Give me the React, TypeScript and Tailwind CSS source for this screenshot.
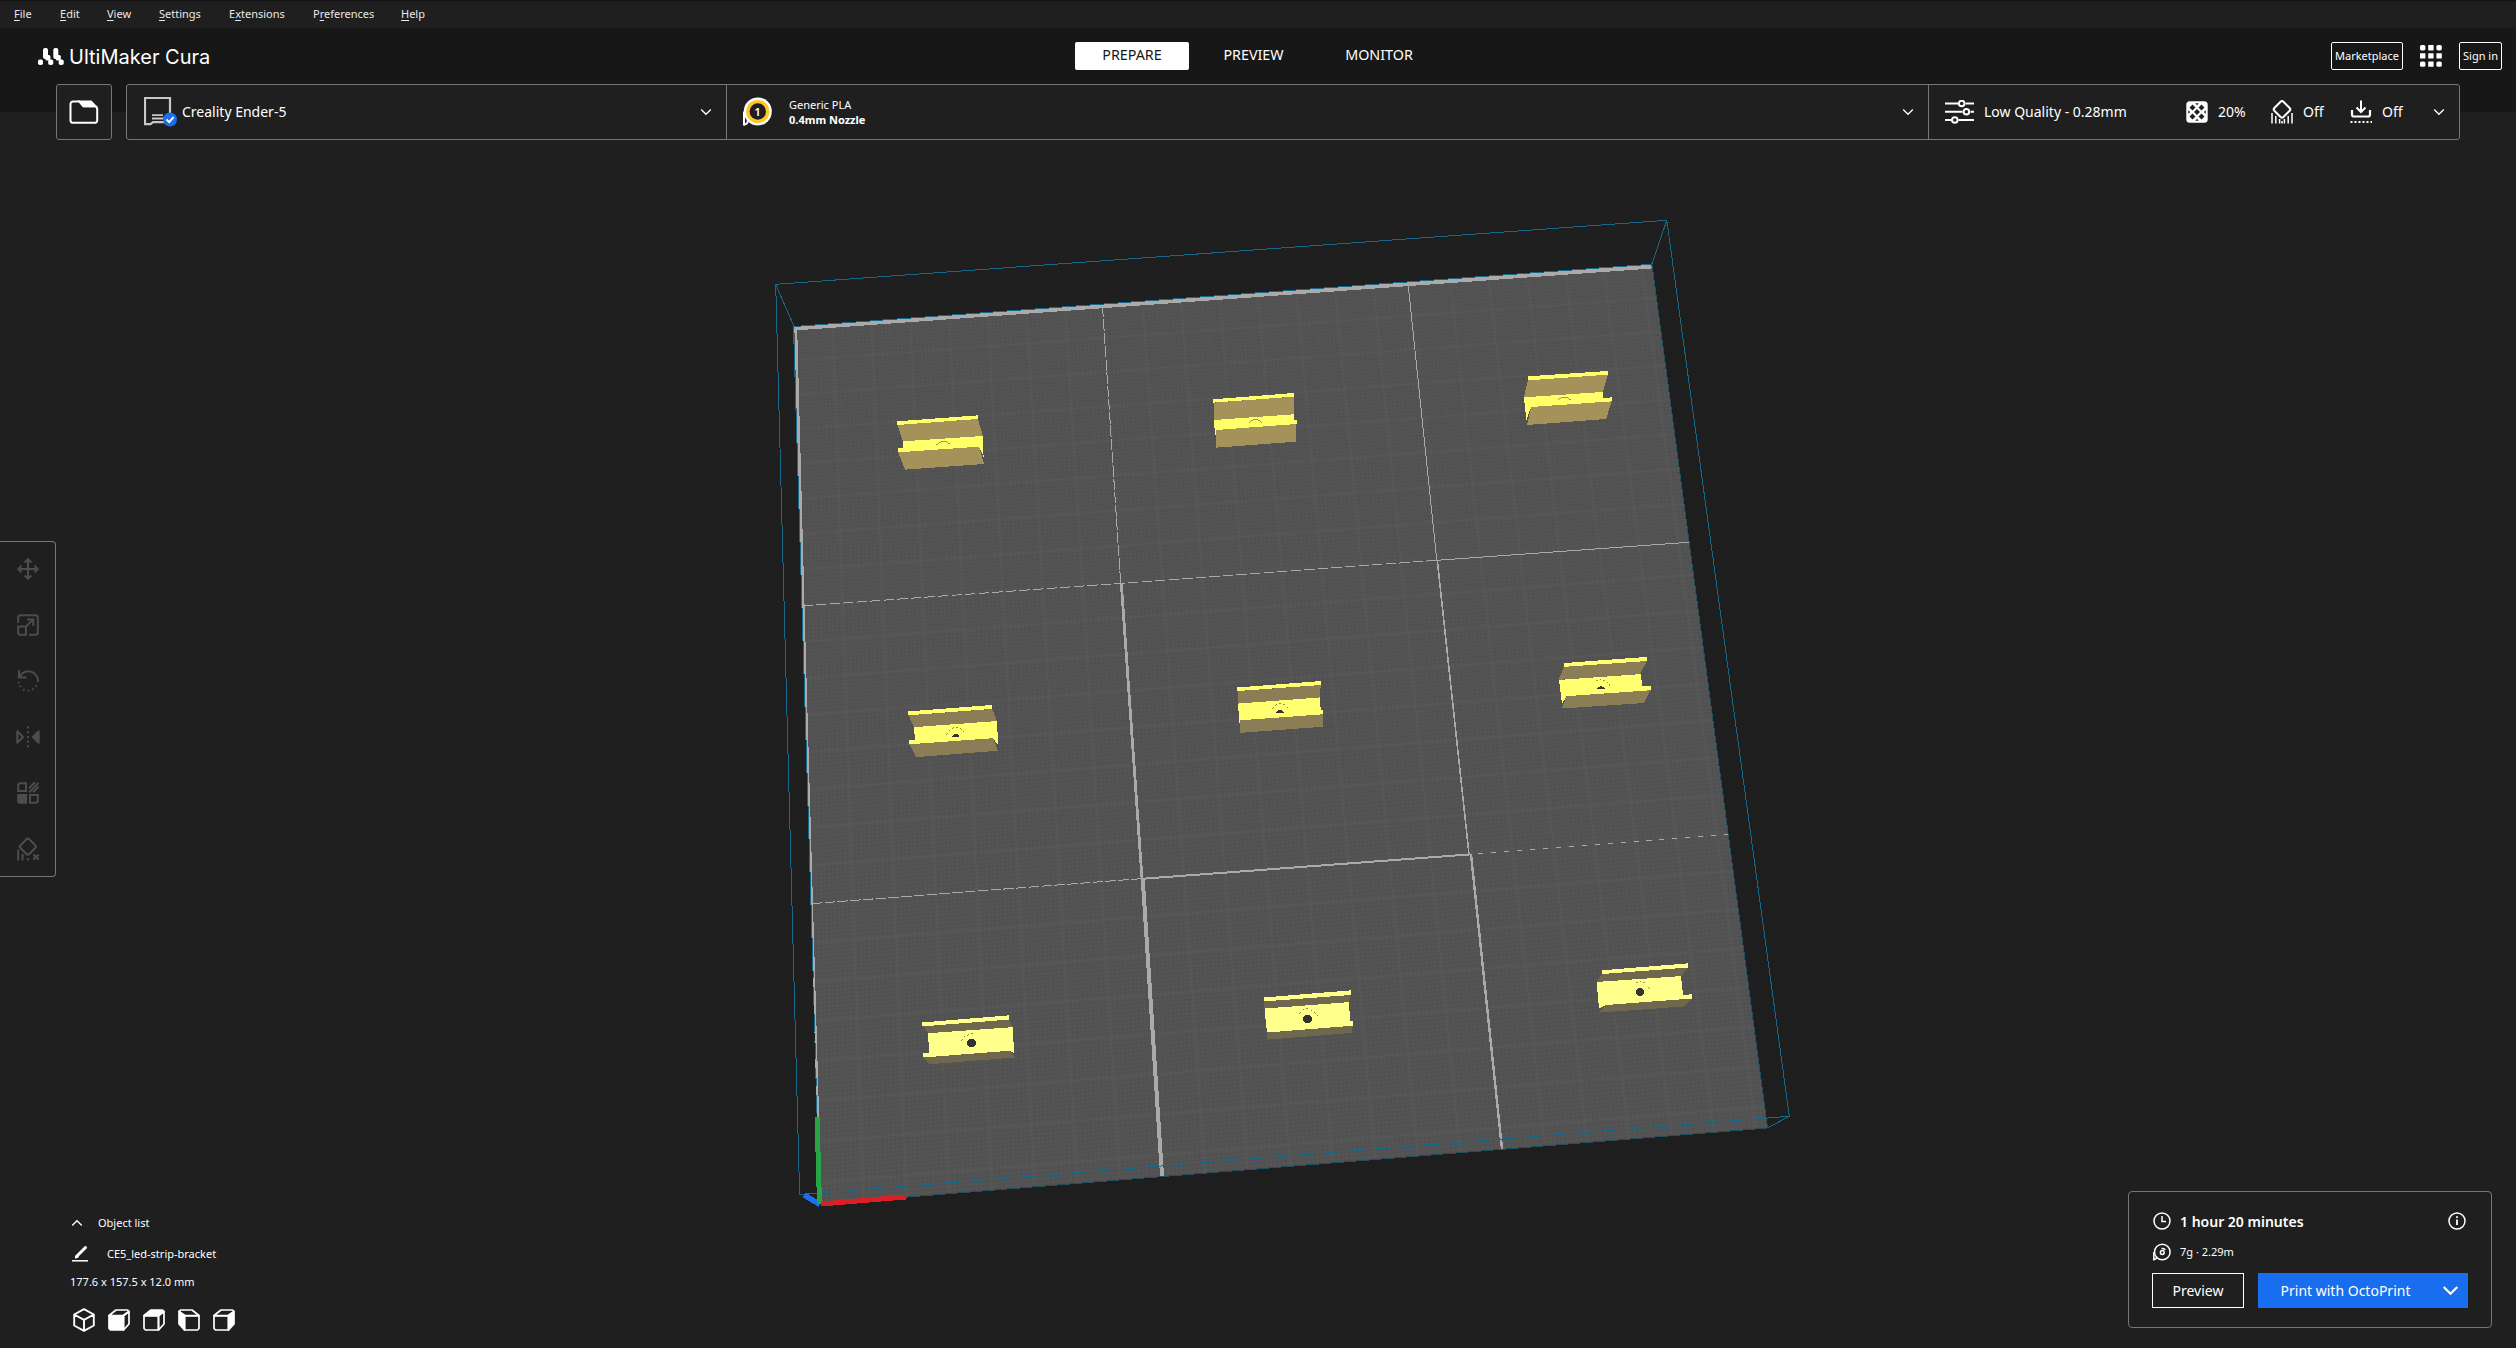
import React from "react";

type P = [number, number];

/* ---------- build plate geometry ---------- */

const TL: P = [794, 326.5];
const TR: P = [1652, 264.5];
const BL: P = [820.5, 1204];
const BR: P = [1767.5, 1128];

// Projective mapping of the unit square onto the plate.
const proj = (() => {
  const sx = TL[0] - TR[0] + BR[0] - BL[0];
  const sy = TL[1] - TR[1] + BR[1] - BL[1];
  const dx1 = TR[0] - BR[0];
  const dx2 = BL[0] - BR[0];
  const dy1 = TR[1] - BR[1];
  const dy2 = BL[1] - BR[1];
  const det = dx1 * dy2 - dx2 * dy1;
  const g = (sx * dy2 - dx2 * sy) / det;
  const h = (dx1 * sy - sx * dy1) / det;
  const a = TR[0] - TL[0] + g * TR[0];
  const b = BL[0] - TL[0] + h * BL[0];
  const d = TR[1] - TL[1] + g * TR[1];
  const e = BL[1] - TL[1] + h * BL[1];
  return (u: number, v: number): P => {
    const w = g * u + h * v + 1;
    return [(a * u + b * v + TL[0]) / w, (d * u + e * v + TL[1]) / w];
  };
})();

const U = 0.0449;
const V = 0.0425;

function seg(u0: number, v0: number, u1: number, v1: number) {
  const [x0, y0] = proj(u0, v0);
  const [x1, y1] = proj(u1, v1);
  return `M${x0.toFixed(1)} ${y0.toFixed(1)}L${x1.toFixed(1)} ${y1.toFixed(1)}`;
}

function gridPath(step: number, keep: (i: number) => boolean) {
  let d = "";
  for (let i = 1; i * step * U < 1; i++) if (keep(i)) d += seg(i * step * U, 0, i * step * U, 1);
  for (let i = 1; i * step * V < 1; i++) if (keep(i)) d += seg(0, i * step * V, 1, i * step * V);
  return d;
}

const fineGrid = gridPath(0.1, (i) => i % 10 !== 0);
const minorGrid = gridPath(1, (i) => i % 8 !== 0);

const BRIGHT = ["#ffff68", "#ffff70", "#ffff8c"];
const DARK = ["#a5925a", "#8b7d55", "#6f684e"];

type Part = {
  row: number;
  t: string;
  dark: string[];
  bright: string[];
  arc: string;
  hole?: React.ReactNode;
};

const A = "translate(760 200) scale(0.35714 0.33333)";
const B = "translate(1300 200) scale(0.35714 0.33333)";
const C = "translate(760 660) scale(0.40816 0.35714)";
const D = "translate(1400 640) scale(0.33333 0.34439)";

const parts: Part[] = [
  {
    row: 0, t: A,
    dark: ["385,675 610,657 624,708 400,724", "387,757 613,738 627,792 406,809"],
    bright: ["384,664 610,646 610,657 384,675", "400,724 624,708 626,770 620,755 613,740 387,757 387,745 400,743"],
    arc: "M494 735Q513 715 532 732",
  },
  {
    row: 0, t: A,
    dark: ["1271,608 1495,590 1495,643 1271,660", "1277,690 1501,672 1501,725 1277,743"],
    bright: ["1268,598 1495,579 1495,590 1268,608", "1271,660 1495,643 1495,660 1503,660 1503,672 1277,690 1277,705 1274,705"],
    arc: "M1369 668Q1387 649 1406 668",
  },
  {
    row: 0, t: B,
    dark: ["638,541 862,524 848,576 627,592", "647,621 873,604 857,657 636,675"],
    bright: ["638,529 862,513 862,524 638,541", "627,592 848,576 848,594 874,592 874,604 647,621 634,660"],
    arc: "M722 600Q740 584 758 600",
  },
  {
    row: 1, t: C,
    dark: ["364,155 569,137 581,171 377,188", "366,236 571,219 583,254 382,272"],
    bright: ["363,144 568,126 568,137 363,155", "377,188 581,171 583,238 571,219 366,236 366,225 380,223"],
    arc: "M457 209Q479 170 501 203",
    hole: <path d="M470 216Q480 197 490 214Z" />,
  },
  {
    row: 1, t: C,
    dark: ["1171,87 1374,70 1371,105 1171,122", "1175,169 1379,152 1379,187 1176,204"],
    bright: ["1169,77 1374,59 1374,70 1169,87", "1171,122 1371,105 1374,140 1379,140 1379,152 1176,169 1175,180"],
    arc: "M1255 137Q1274 108 1295 135",
    hole: <path d="M1264 148Q1274 130 1284 147Z" />,
  },
  {
    row: 1, t: D,
    dark: ["492,78 741,61 720,99 475,116", "500,163 752,146 732,183 486,199"],
    bright: ["492,67 741,49 741,61 492,78", "477,116 722,99 727,134 752,134 752,146 500,163 486,185"],
    arc: "M588 119Q622 108 632 138",
    hole: <path d="M590 142Q602 126 615 142Z" />,
  },
  {
    row: 2, t: C,
    dark: ["400,1026 609,1007 620,1028 412,1045", "400,1113 612,1094 625,1113 415,1132"],
    bright: ["397,1015 609,995 609,1007 397,1026", "412,1045 620,1028 622,1100 612,1094 400,1113 400,1101 414,1100"],
    arc: "M493 1067Q502 1046 528 1046",
    hole: <ellipse cx="518" cy="1073" rx="11" ry="12" />,
  },
  {
    row: 2, t: C,
    dark: ["1236,956 1447,938 1443,958 1236,976", "1242,1043 1452,1024 1450,1044 1243,1063"],
    bright: ["1235,945 1447,925 1447,938 1235,956", "1236,976 1443,958 1446,1012 1453,1012 1453,1024 1242,1043"],
    arc: "M1322 990Q1340 960 1366 997",
    hole: <ellipse cx="1341" cy="1005" rx="11" ry="12" />,
  },
  {
    row: 2, t: D,
    dark: ["606,969 864,950 845,976 590,993", "617,1060 875,1041 852,1064 597,1082"],
    bright: ["606,959 864,939 864,951 606,970", "590,993 843,976 849,1030 876,1029 876,1041 617,1060 597,1070"],
    arc: "M708 994Q740 988 749 1014",
    hole: <circle cx="720" cy="1022" r="12" />,
  },
];

function Bracket({ part }: { part: Part }) {
  return (
    <g transform={part.t}>
      {part.dark.map((p) => (
        <polygon key={p} points={p} fill={DARK[part.row]} />
      ))}
      {part.bright.map((p) => (
        <polygon key={p} points={p} fill={BRIGHT[part.row]} />
      ))}
      <path d={part.arc} fill="none" stroke="#8a8148" strokeWidth="2.4" strokeDasharray={part.row ? "5 6" : undefined} />
      {part.hole && <g fill="#333331">{part.hole}</g>}
    </g>
  );
}

function Scene() {
  return (
    <svg className="absolute inset-0 h-[1348px] w-[2516px]" viewBox="0 0 2516 1348" shapeRendering="crispEdges" fill="none">
      <polygon points="794,327 1711,263 1838,1139 1500,1167 820,1219" fill="#1e1e1e" />
      <polygon points="794,326.5 1652,264.5 1767.5,1128 820.5,1204" fill="#555555" />
      <path d={fineGrid} stroke="#505050" shapeRendering="geometricPrecision" strokeWidth="0.9" />
      <path d={minorGrid} stroke="#585858" shapeRendering="geometricPrecision" />

      <g stroke="#aaaaaa">
        <path d="M794.5 328.5L1651.500 266.500" strokeWidth="4" />
        <path d="M795.800 328L804.600 660" strokeWidth="2.800" />
        <path d="M804.900 660L820.500 1203" strokeWidth="2.200" />
        <path d="M802.4 606L1120.7 583.3L1436.8 560.3" strokeDasharray="10.3 3.3" />
        <path d="M1436.8 560.3L1689 542.3" />
        <path d="M1102.5 306L1120.7 583.3" strokeDasharray="11.5 1.8" />
        <path d="M1408 283L1436.8 560.3" />
        <path d="M1121.3 583.3L1142 878.6" strokeWidth="2.800" />
        <path d="M1142.7 878.6L1162 1176" strokeWidth="4" />
        <path d="M1437.3 560.3L1469 854.2" strokeWidth="1.6" />
        <path d="M1471 854.2L1502 1149" strokeWidth="2.4" />
        <path d="M811.8 903.6L1142 878.6" strokeDasharray="10.5 2.3" />
        <path d="M1142 878.8L1470 854.4" strokeWidth="2" />
        <path d="M1478 853.6L1728.7 834.2" strokeDasharray="5 8" />
      </g>

      <g stroke="#14698a">
        <path d="M775.7 284.3L1666.8 220.3L1789.3 1116.3L799.6 1194.6Z" />
        <path d="M775.7 284.3L794 326.500L1651.8 264.200L1666.8 220.3" />
        <path d="M793.500 326.7L812.700 960" />
        <path d="M812.700 960L819.500 1203" strokeDasharray="18 9" />
        <path d="M1789.3 1116.3L1767.3 1128" />
      </g>
      <path d="M1652 264.7L1767.5 1128L820.5 1204" stroke="#234e5e" />

      {parts.map((p, i) => (
        <Bracket key={i} part={p} />
      ))}

      <path d="M804 1195L820 1204.5" stroke="#1a6ff0" strokeWidth="5.500" />
      <path d="M817 1117L819.500 1204" stroke="#26a544" strokeWidth="5" />
      <path d="M821 1204L905.5 1197" stroke="#dc1f26" strokeWidth="5" />
    </svg>
  );
}

/* ---------- icons ---------- */

function Chevron({ size = 12, up = false, w = 1.3 }: { size?: number; up?: boolean; w?: number }) {
  return (
    <svg width={size} height={size} viewBox="0 0 12 12" fill="none" stroke="#fff" strokeWidth={w}>
      <path d={up ? "M1.2 8.5L6 3.7L10.8 8.5" : "M1.2 3.5L6 8.3L10.8 3.5"} />
    </svg>
  );
}

function Logo() {
  return (
    <svg className="mt-px" width="26" height="18" viewBox="0 0 26 18" fill="#fff">
      <rect x="5" y="0" width="5" height="11" rx="2" />
      <rect x="15.3" y="0" width="5" height="11" rx="2" />
      <rect x="0" y="11.5" width="5" height="5.5" rx="1.8" />
      <rect x="10.2" y="11.5" width="5" height="5.5" rx="1.8" />
      <rect x="20.7" y="11.5" width="5" height="5.5" rx="1.8" />
      <rect x="7.4" y="7" width="5" height="5.5" rx="1.5" />
      <rect x="17.8" y="7" width="5" height="5.5" rx="1.5" />
    </svg>
  );
}

function FolderIcon() {
  return (
    <svg width="30" height="24" viewBox="0 0 30 24" fill="none" stroke="#fff" strokeWidth="2">
      <path d="M1.500 4A2.500 2.500 0 0 1 4 1.500H10.500L14.500 6.200H25.500A3 3 0 0 1 28.200 9V20A2.500 2.500 0 0 1 25.700 22.800H4A2.500 2.500 0 0 1 1.500 20Z" />
      <path d="M10.500 1.500H22L26.500 6.200H14.500Z" fill="#fff" />
    </svg>
  );
}

function PrinterIcon() {
  return (
    <svg width="34" height="30" viewBox="0 0 34 30" fill="none">
      <path d="M1 1H26V27H24.500L21.500 25.200H9L6.500 27.200H1Z" stroke="#c8c8c8" strokeWidth="2.200" />
      <path d="M8 18.200H19M8 21.500H20" stroke="#c8c8c8" strokeWidth="1.800" />
      <circle cx="26" cy="22.500" r="7" fill="#196ef0" />
      <path d="M22.500 22.500L25.200 25.100L29.600 20.100" stroke="#fff" strokeWidth="2" />
    </svg>
  );
}

function SpoolBadge() {
  return (
    <svg width="30" height="30" viewBox="0 0 30 30">
      <path d="M1 28.500V14.500" stroke="#fff" strokeWidth="2" />
      <path d="M1 27.500Q5 27.500 5 22" stroke="#fff" strokeWidth="2" fill="none" />
      <circle cx="14.800" cy="14.500" r="14" fill="#fff" />
      <circle cx="14.800" cy="14.500" r="11.600" fill="#ffc828" />
      <circle cx="14.800" cy="14.500" r="8.200" fill="#1f1f1f" />
      <text x="14.600" y="18.600" textAnchor="middle" fontSize="11.500" fontWeight="600" fontFamily="Noto Sans, sans-serif" fill="#fff">1</text>
    </svg>
  );
}

function SlidersIcon() {
  return (
    <svg width="29" height="24" viewBox="0 0 29 24" fill="none" stroke="#fff" strokeWidth="2">
      <path d="M0 3.500H13M20.500 3.500H29M0 11.800H17.500M25.500 11.800H29M0 20H6M13.500 20H29" />
      <circle cx="16.700" cy="3.500" r="2.800" />
      <circle cx="21.400" cy="11.800" r="2.800" />
      <circle cx="9.800" cy="20" r="2.800" />
    </svg>
  );
}

function InfillIcon() {
  return (
    <svg width="22" height="22" viewBox="0 0 22 22" fill="#1f1f1f">
      <rect x="0.300" y="0.300" width="21.400" height="21.400" rx="3.500" fill="#fff" />
      <path d="M11 8L14 11L11 14L8 11Z" />
      <path d="M6.500 3.500L9.500 6.500L6.500 9.500L3.500 6.500ZM15.500 3.500L18.500 6.500L15.500 9.500L12.500 6.500ZM6.500 12.500L9.500 15.500L6.500 18.500L3.500 15.500ZM15.500 12.500L18.500 15.500L15.500 18.500L12.500 15.500Z" />
      <path d="M9.300 2.300H12.700L11 4.200ZM9.300 19.700H12.700L11 17.800ZM2.300 9.300V12.700L4.200 11ZM19.700 9.300V12.700L17.800 11Z" />
    </svg>
  );
}

function SupportIcon() {
  return (
    <svg width="22" height="24" viewBox="0 0 22 24" fill="none" stroke="#fff" strokeWidth="2">
      <rect x="4.600" y="3" width="12.800" height="12.800" rx="2" transform="rotate(45 11 9.400)" />
      <path d="M1 13V23.500M4.800 16V23.500M17.200 16V23.500M21 13V23.500M8.600 19V23.500M13.400 19V23.500M11 21V23.500" strokeWidth="1.500" />
    </svg>
  );
}

function AdhesionIcon() {
  return (
    <svg width="22" height="24" viewBox="0 0 22 24" fill="none" stroke="#fff" strokeWidth="2">
      <path d="M11 0.500V11.500M6.500 7.500L11 12L15.500 7.500" />
      <path d="M2 10V14.500A2 2 0 0 0 4 16.500H18A2 2 0 0 0 20 14.500V10" strokeWidth="2.200" />
      <path d="M0.500 22H22" strokeDasharray="2 2" />
    </svg>
  );
}

function GridIcon() {
  const s = [0, 8.2, 16.4];
  return (
    <svg width="22" height="22" viewBox="0 0 22 22" fill="#fff">
      {s.map((x) => s.map((y) => <rect key={`${x}-${y}`} x={x} y={y} width="5.4" height="5.4" rx={x !== 8.2 && y !== 8.2 ? 1.6 : 0.4} />))}
    </svg>
  );
}

function ToolMove() {
  return (
    <svg width="24" height="24" viewBox="0 0 24 24" fill="none" stroke="#4d4d4d" strokeWidth="2">
      <path d="M12 2.500V21.500M2.500 12H21.500M8.700 5.500L12 2.200L15.300 5.500M8.700 18.500L12 21.800L15.300 18.500M5.500 8.700L2.200 12L5.500 15.300M18.500 8.700L21.800 12L18.500 15.300" />
    </svg>
  );
}
function ToolScale() {
  return (
    <svg width="24" height="24" viewBox="0 0 24 24" fill="none" stroke="#4d4d4d" strokeWidth="2">
      <path d="M2.200 10V4.200A2 2 0 0 1 4.200 2.200H19.800A2 2 0 0 1 21.800 4.200V19.800A2 2 0 0 1 19.800 21.800H13" />
      <path d="M2.200 13.500H10V21.800H4.200A2 2 0 0 1 2.200 19.800ZM10 13.500L17 6.500M11 6.500H17.300V13" />
    </svg>
  );
}
function ToolRotate() {
  return (
    <svg width="24" height="24" viewBox="0 0 24 24" fill="none" stroke="#4d4d4d" strokeWidth="2">
      <path d="M3 1V8.500H10.500M3.500 8A9.700 9.700 0 0 1 22 13" />
      <g fill="#4d4d4d" stroke="none">
        <circle cx="2.700" cy="13.500" r="1" />
        <circle cx="4.300" cy="17.500" r="1" />
        <circle cx="7.800" cy="20.700" r="1" />
        <circle cx="12.500" cy="21.700" r="1" />
        <circle cx="17" cy="20.300" r="1" />
        <circle cx="20.200" cy="17" r="1" />
      </g>
    </svg>
  );
}
function ToolMirror() {
  return (
    <svg width="24" height="24" viewBox="0 0 24 24" fill="none" stroke="#4d4d4d" strokeWidth="2">
      <path d="M1.300 6.200V17.800L7 12Z" strokeLinejoin="round" />
      <path d="M22.700 6.200V17.800L17 12Z" fill="#4d4d4d" strokeLinejoin="round" />
      <path d="M12 1.500V23" strokeDasharray="2 2.700" />
    </svg>
  );
}
function ToolMeshType() {
  return (
    <svg width="24" height="24" viewBox="0 0 24 24" fill="none" stroke="#4d4d4d" strokeWidth="2">
      <path d="M2.200 10V4.200A2 2 0 0 1 4.200 2.200H10V10ZM14 14H21.800V19.800A2 2 0 0 1 19.800 21.800H14Z" />
      <path d="M1.200 13H11V22.800H4A2.800 2.800 0 0 1 1.200 20Z" fill="#4d4d4d" stroke="none" />
      <path d="M13 7.200L19 1.300M13.200 11.200L22.500 2M17 11.200L22.700 5.700" />
    </svg>
  );
}
function ToolSupport() {
  return (
    <svg width="24" height="24" viewBox="0 0 24 24" fill="none" stroke="#4d4d4d" strokeWidth="2">
      <rect x="5.600" y="3.600" width="12.400" height="12.400" rx="2" transform="rotate(45 12 9.800)" />
      <path d="M2.200 12.500V23.500M6.500 17V23.500M11.800 21V23.500" />
      <path d="M17.300 17.500L22.700 22.500M22.700 17.500L17.300 22.500" strokeWidth="2.200" />
    </svg>
  );
}

function IsoCube() {
  return (
    <svg width="22" height="24" viewBox="0 0 22 24" fill="none" stroke="#fff" strokeWidth="1.900" strokeLinejoin="round">
      <path d="M11 1.200L20.800 6.500V17.500L11 22.800L1.200 17.500V6.500ZM1.200 6.500L11 11.800L20.800 6.500M11 11.800V22.800" />
    </svg>
  );
}

function BoxCube({ face }: { face: "front" | "top" | "side" }) {
  const f = (on: boolean) => (on ? "#fff" : "none");
  return (
    <svg width="22" height="24" viewBox="0 0 22 24" fill="none" stroke="#fff" strokeWidth="1.700" strokeLinejoin="round">
      <path d="M1 7.500L8 2H19.500L21 3.500L15.500 7.500Z" fill={f(face === "top")} />
      <path d="M21 3.500V16L15.500 22V7.500Z" fill={f(face === "side")} />
      <path d="M1 7.800H15.500V22H2.500L1 20.500Z" fill={f(face === "front")} />
    </svg>
  );
}

/* ---------- panels ---------- */

const menus: { label: string; i: number; w: string }[] = [
  { label: "File", i: 0, w: "w-[46px]" },
  { label: "Edit", i: 0, w: "w-[47px]" },
  { label: "View", i: 0, w: "w-[52px]" },
  { label: "Settings", i: 0, w: "w-[70px]" },
  { label: "Extensions", i: 1, w: "w-[84px]" },
  { label: "Preferences", i: 1, w: "w-[88px]" },
  { label: "Help", i: 0, w: "w-[40px]" },
];

function MenuBar() {
  return (
    <div className="flex h-7 items-center border-t border-[#141414] bg-[#1f1f1f] pl-[14px] text-[11px] text-[#e8e8e8]">
      {menus.map((m) => (
        <span key={m.label} className={m.w}>
          {m.label.slice(0, m.i)}
          <span className="underline underline-offset-2">{m.label[m.i]}</span>
          {m.label.slice(m.i + 1)}
        </span>
      ))}
    </div>
  );
}

function Header() {
  return (
    <header className="flex h-[84px] items-start justify-between bg-[#171717] pt-[14px] pr-[14px] pl-[38px]">
      <div className="flex h-7 w-[1037px] items-center">
        <Logo />
        <span className="ml-[5px] pt-0.5 font-['Inter'] text-[20px] leading-7 whitespace-nowrap">UltiMaker Cura</span>
      </div>
      <nav className="flex h-7 flex-1 items-center text-[14.3px] leading-[26px]">
        <span className="h-7 w-[114px] rounded-[2px] bg-white text-center text-[#171717]">PREPARE</span>
        <span className="h-7 w-[129px] text-center">PREVIEW</span>
        <span className="h-7 w-[122px] text-center">MONITOR</span>
      </nav>
      <div className="flex h-7 items-center text-[11px]">
        <span className="flex h-7 w-[72px] items-center justify-center rounded-[2px] border border-white">Marketplace</span>
        <span className="mr-[17px] ml-[17px]">
          <GridIcon />
        </span>
        <span className="flex h-7 w-[43px] items-center justify-center rounded-[2px] border border-white">Sign in</span>
      </div>
    </header>
  );
}

function ConfigBar() {
  return (
    <div className="relative -mt-7 flex h-14 pr-14 pl-14 text-[14px]">
      <div className="flex w-14 items-center justify-center rounded-[3px] border border-[#777] bg-[#1f1f1f] pb-px">
        <FolderIcon />
      </div>
      <div className="ml-[14px] flex flex-1 rounded-[3px] border border-[#777] bg-[#1f1f1f]">
        <div className="flex w-[600px] items-center border-r border-[#777] pr-[14px] pb-px pl-[17px]">
          <PrinterIcon />
          <span className="ml-[4px] flex-1">Creality Ender-5</span>
          <Chevron />
        </div>
        <div className="flex w-[1202px] items-center border-r border-[#777] pr-[14px] pb-px pl-[16px]">
          <SpoolBadge />
          <div className="ml-4 flex flex-1 flex-col text-[11px] leading-[15px]">
            <span>Generic PLA</span>
            <span className="font-bold">0.4mm Nozzle</span>
          </div>
          <Chevron />
        </div>
        <div className="flex flex-1 items-center pr-[14px] pb-px pl-4">
          <SlidersIcon />
          <span className="ml-[10px] w-[202px] whitespace-nowrap">Low Quality - 0.28mm</span>
          <InfillIcon />
          <span className="ml-[10px] w-[53px]">20%</span>
          <SupportIcon />
          <span className="ml-[10px] w-[47px]">Off</span>
          <AdhesionIcon />
          <span className="ml-[10px] flex-1">Off</span>
          <Chevron />
        </div>
      </div>
    </div>
  );
}

function Toolbar() {
  return (
    <div className="flex h-[336px] w-14 flex-col items-center overflow-hidden rounded-r-[4px] border border-l-0 border-[#777] bg-[#1f1f1f]">
      {[ToolMove, ToolScale, ToolRotate, ToolMirror, ToolMeshType, ToolSupport].map((Icon, i) => (
        <span key={i} className="flex h-14 w-full shrink-0 items-center justify-center pb-0.5">
          <Icon />
        </span>
      ))}
    </div>
  );
}

function ObjectList() {
  return (
    <div className="ml-[70px] flex w-[300px] flex-col text-[11px]">
      <div className="flex h-[30px] items-center">
        <span className="flex w-7 pl-px">
          <Chevron up />
        </span>
        Object list
      </div>
      <div className="flex h-8 items-center">
        <svg className="ml-[2px] mr-[19px]" width="16" height="18" viewBox="0 0 16 18" fill="none" stroke="#fff">
          <path d="M4.500 11.500L13.500 2.500" strokeWidth="3" strokeLinecap="round" />
          <path d="M3.200 13.200L4.500 10L6.500 12Z" fill="#fff" />
          <path d="M0 15.800H16" strokeWidth="1.500" />
        </svg>
        CE5_led-strip-bracket
      </div>
      <div className="flex h-6 items-center">177.6 x 157.5 x 12.0 mm</div>
      <div className="mt-[14px] ml-[3px] flex gap-[13px]">
        <IsoCube />
        <BoxCube face="front" />
        <BoxCube face="top" />
        <span className="-scale-x-100">
          <BoxCube face="side" />
        </span>
        <BoxCube face="side" />
      </div>
    </div>
  );
}

function ActionPanel() {
  return (
    <div className="mr-[24px] mb-1 h-[137px] w-[364px] rounded-[4px] border border-[#777] bg-[#1f1f1f] px-[23px] pt-[18px]">
      <div className="flex h-[22px] items-center">
        <svg width="20" height="20" viewBox="0 0 20 20" fill="none" stroke="#fff" strokeWidth="1.500">
          <circle cx="10" cy="10" r="8" />
          <path d="M10 5V10.500H14" />
        </svg>
        <span className="ml-[8px] flex-1 text-[14px] font-semibold">1 hour 20 minutes</span>
        <svg className="mr-px" width="20" height="20" viewBox="0 0 20 20" fill="none" stroke="#fff" strokeWidth="1.500">
          <circle cx="10" cy="10" r="8" />
          <path d="M10 8.500V14M10 5.300V7" strokeWidth="1.800" />
        </svg>
      </div>
      <div className="mt-[9px] flex h-[22px] items-center">
        <svg width="20" height="20" viewBox="0 0 20 20" fill="none" stroke="#fff" strokeWidth="1.500">
          <circle cx="10.300" cy="10" r="7.800" />
          <path d="M1.800 18.500V10M2 17.500Q4.500 17.500 4.700 14.500" />
          <circle cx="10.300" cy="10.500" r="1.900" />
          <path d="M9.500 6.500Q12.500 6 13.300 8" />
        </svg>
        <span className="ml-[8px] pt-px text-[11px]">7g · 2.29m</span>
      </div>
      <div className="mt-[10px] flex h-[35px] text-[14px]">
        <span className="flex w-[92px] items-center justify-center border border-white pb-px">Preview</span>
        <span className="ml-[14px] flex w-[210px] items-center bg-[#196ef0] pb-px">
          <span className="w-[175px] text-center">Print with OctoPrint</span>
          <span className="ml-[9px]">
            <Chevron size={17} w={1.5} />
          </span>
        </span>
      </div>
    </div>
  );
}

export default function App() {
  return (
    <div className="relative h-[1348px] w-[2516px] overflow-hidden bg-[#1f1f1f] font-['Noto_Sans',sans-serif] text-white">
      <Scene />
      <div className="relative flex h-full flex-col">
        <MenuBar />
        <Header />
        <ConfigBar />
        <div className="flex flex-1 flex-col justify-between pt-[401px] pb-[16px]">
          <Toolbar />
          <div className="flex items-end justify-between">
            <ObjectList />
            <ActionPanel />
          </div>
        </div>
      </div>
    </div>
  );
}
